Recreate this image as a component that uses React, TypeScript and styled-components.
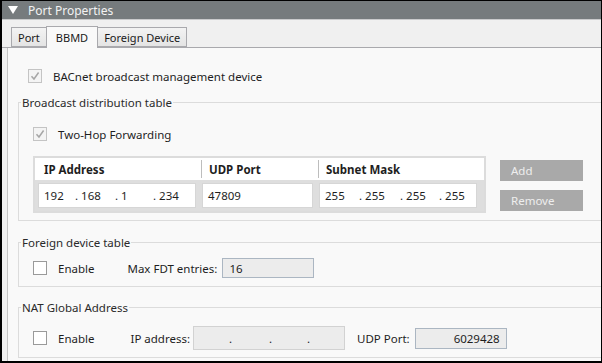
import React from "react";
import styled, { createGlobalStyle } from "styled-components";

const Global = createGlobalStyle`
  html, body { margin: 0; padding: 0; background: #ffffff; }
  * { box-sizing: border-box; }
`;

const FONT = `"Noto Sans", "Open Sans", sans-serif`;

const Frame = styled.div`
  width: 602px;
  height: 363px;
  border: 1px solid #000;
  border-left-width: 2px;
  border-bottom-width: 2px;
  display: flex;
  flex-direction: column;
  background: #f0f0f0;
  font-family: ${FONT};
  font-size: 11.5px;
  color: #1e1e1e;
  overflow: hidden;
`;

const Header = styled.div`
  height: 19px;
  background: #767b7d;
  display: flex;
  align-items: center;
  gap: 10px;
  padding-left: 6px;
  color: #f2f2f2;
  font-size: 12px;
  border-bottom: 1px solid #c9cacb;
`;

const Triangle = styled.span`
  width: 0;
  height: 0;
  border-left: 5px solid transparent;
  border-right: 5px solid transparent;
  border-top: 8px solid #ffffff;
`;

const TabStrip = styled.div`
  height: 28px;
  display: flex;
  align-items: flex-end;
  padding-left: 10px;
  border-bottom: 1px solid #a9a9ad;
`;

const Tab = styled.div<{ $active?: boolean }>`
  height: ${(p) => (p.$active ? 22 : 20)}px;
  margin-bottom: ${(p) => (p.$active ? -1 : 0)}px;
  padding: 0 ${(p) => (p.$active ? 9 : 6)}px;
  display: flex;
  align-items: center;
  font-size: 11px;
  border: 1px solid #a9a9ad;
  border-bottom: ${(p) => (p.$active ? "none" : "1px solid #a9a9ad")};
  margin-left: -1px;
  background: ${(p) =>
    p.$active ? "#f9f9f9" : "linear-gradient(#f3f3f3, #e4e4e4)"};
  color: #1a1a1a;
  position: relative;
  z-index: ${(p) => (p.$active ? 1 : 0)};
`;

const Panel = styled.div`
  flex: 1;
  margin-left: 5px;
  border-left: 1px solid #c4c4c4;
  background: #f9f9f9;
  display: flex;
  flex-direction: column;
  padding-top: 21px;
`;

const CheckRow = styled.label<{ $indent: number; $top?: number }>`
  display: flex;
  align-items: center;
  gap: 11px;
  padding-left: ${(p) => p.$indent}px;
  margin-top: ${(p) => p.$top ?? 0}px;
  height: 14px;
`;

const Box = styled.span<{ $disabled?: boolean }>`
  width: 14px;
  height: 14px;
  border: 1px solid ${(p) => (p.$disabled ? "#c4c4c4" : "#9a9a9a")};
  background: ${(p) => (p.$disabled ? "#f4f4f4" : "#ffffff")};
  display: flex;
  align-items: center;
  justify-content: center;
`;

const Group = styled.fieldset<{ $height: number; $top: number }>`
  margin: ${(p) => p.$top}px 0 0 10px;
  padding: 0;
  height: ${(p) => p.$height}px;
  border: 1px solid #dcdcdc;
  border-right: none;
  min-width: 0;
  display: flex;
  flex-direction: column;
`;

const Legend = styled.legend`
  padding: 0 1px;
  margin-left: 2px;
  color: #2a2a2a;
`;

const GroupBody = styled.div`
  display: flex;
  flex-direction: column;
`;

const TableRow = styled.div`
  display: flex;
  align-items: flex-start;
  gap: 14px;
  padding-left: 14px;
  margin-top: 15px;
`;

const Table = styled.div`
  width: 453px;
  height: 57px;
  border: 2px solid #dcdcdc;
  background: #dedede;
  display: flex;
  flex-direction: column;
`;

const HeadRow = styled.div`
  height: 22px;
  background: #ffffff;
  display: grid;
  grid-template-columns: 166px 117px 1fr;
  align-items: center;
`;

const HeadCell = styled.div<{ $sep?: boolean }>`
  font-weight: bold;
  padding-left: ${(p) => (p.$sep ? 7 : 9)}px;
  border-left: ${(p) => (p.$sep ? "1px solid #bdbdbd" : "none")};
  height: 18px;
  display: flex;
  align-items: center;
`;

const DataRow = styled.div`
  display: grid;
  grid-template-columns: 158px 111px 158px;
  gap: 6px;
  padding: 3px 0 0 3px;
`;

const CellInput = styled.div`
  height: 25px;
  background: #ffffff;
  border: 1px solid #d6d6d6;
  display: flex;
  align-items: center;
  padding-left: 5px;
  white-space: pre;
`;

const IpPart = styled.span<{ $w: number }>`
  display: inline-block;
  width: ${(p) => p.$w}px;
`;

const Buttons = styled.div`
  display: flex;
  flex-direction: column;
  gap: 9px;
  padding-top: 4px;
`;

const Button = styled.div`
  width: 83px;
  height: 21px;
  background: #a9a9a9;
  color: #eeeeee;
  display: flex;
  align-items: center;
  padding-left: 11px;
`;

const InlineRow = styled.div<{ $top: number }>`
  display: flex;
  align-items: center;
  padding-left: 14px;
  margin-top: ${(p) => p.$top}px;
`;

const Label = styled.span<{ $ml: number }>`
  margin-left: ${(p) => p.$ml}px;
`;

const Field = styled.div<{ $w: number; $h: number; $ml: number; $right?: boolean; $blue?: boolean }>`
  width: ${(p) => p.$w}px;
  height: ${(p) => p.$h}px;
  margin-left: ${(p) => p.$ml}px;
  background: #ececec;
  border: 1px solid ${(p) => (p.$blue ? "#abb6c2" : "#d2d2d2")};
  display: flex;
  align-items: center;
  justify-content: ${(p) => (p.$right ? "flex-end" : "flex-start")};
  padding: 0 6px;
  white-space: pre;
`;

const Dot = styled.span<{ $w: number }>`
  display: inline-block;
  width: ${(p) => p.$w}px;
  text-align: right;
`;

const Check = ({ checked, disabled }: { checked?: boolean; disabled?: boolean }) => (
  <Box $disabled={disabled}>
    {checked && (
      <svg width="10" height="10" viewBox="0 0 10 10">
        <path d="M1.5 5.2 L4 8 L8.6 1.5" fill="none" stroke="#a6a6a6" strokeWidth="1.5" />
      </svg>
    )}
  </Box>
);

export default function App() {
  return (
    <>
      <Global />
      <Frame>
        <Header>
          <Triangle />
          <span>Port Properties</span>
        </Header>
        <TabStrip>
          <Tab>Port</Tab>
          <Tab $active>BBMD</Tab>
          <Tab>Foreign Device</Tab>
        </TabStrip>
        <Panel>
          <CheckRow $indent={20}>
            <Check checked disabled />
            <span>BACnet broadcast management device</span>
          </CheckRow>
          <Group $height={126} $top={12}>
            <Legend>Broadcast distribution table</Legend>
            <GroupBody>
              <CheckRow $indent={14} $top={17}>
                <Check checked disabled />
                <span>Two-Hop Forwarding</span>
              </CheckRow>
              <TableRow>
                <Table>
                  <HeadRow>
                    <HeadCell>IP Address</HeadCell>
                    <HeadCell $sep>UDP Port</HeadCell>
                    <HeadCell $sep>Subnet Mask</HeadCell>
                  </HeadRow>
                  <DataRow>
                    <CellInput>
                      <IpPart $w={31}>192</IpPart>
                      <IpPart $w={40}>. 168</IpPart>
                      <IpPart $w={38}>. 1</IpPart>
                      <IpPart $w={32}>. 234</IpPart>
                    </CellInput>
                    <CellInput>47809</CellInput>
                    <CellInput>
                      <IpPart $w={34}>255</IpPart>
                      <IpPart $w={41}>. 255</IpPart>
                      <IpPart $w={39}>. 255</IpPart>
                      <IpPart $w={30}>. 255</IpPart>
                    </CellInput>
                  </DataRow>
                </Table>
                <Buttons>
                  <Button>Add</Button>
                  <Button>Remove</Button>
                </Buttons>
              </TableRow>
            </GroupBody>
          </Group>
          <Group $height={52} $top={14}>
            <Legend>Foreign device table</Legend>
            <InlineRow $top={8}>
              <Check />
              <Label $ml={11}>Enable</Label>
              <Label $ml={33}>Max FDT entries:</Label>
              <Field $w={92} $h={20} $ml={5} $blue>16</Field>
            </InlineRow>
          </Group>
          <Group $height={58} $top={13}>
            <Legend>NAT Global Address</Legend>
            <InlineRow $top={11}>
              <Check />
              <Label $ml={11}>Enable</Label>
              <Label $ml={36}>IP address:</Label>
              <Field $w={152} $h={24} $ml={3}>
                <Dot $w={32}>.</Dot>
                <Dot $w={40}>.</Dot>
                <Dot $w={38}>.</Dot>
              </Field>
              <Label $ml={12}>UDP Port:</Label>
              <Field $w={92} $h={21} $ml={5} $right $blue>6029428</Field>
            </InlineRow>
          </Group>
        </Panel>
      </Frame>
    </>
  );
}
